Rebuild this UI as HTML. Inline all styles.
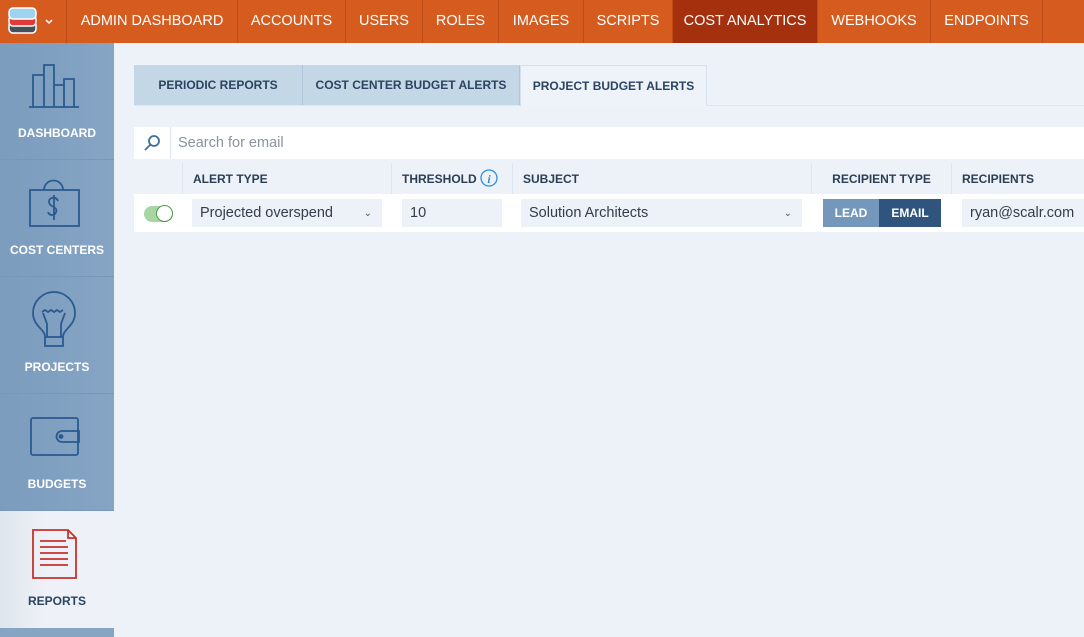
<!DOCTYPE html><html><head><style>
*{box-sizing:border-box;margin:0;padding:0}
body{width:1084px;height:637px;overflow:hidden;background:#edf2f9;font-family:"Liberation Sans",sans-serif;position:relative}
.nav{position:absolute;left:0;top:0;width:1084px;height:43px;background:#d55b1e;display:flex}
.nav div{height:43px;border-right:1px solid #c04c15;color:#fff;font-size:14.5px;line-height:43px;text-align:center}
.nav .act{background:#a5300e}
.side{position:absolute;left:0;top:43px;width:114px;height:594px;background:linear-gradient(90deg,#7c9cbd,#86a5c5)}
.si{position:absolute;left:0;width:114px;height:117px;border-bottom:1px solid #7898ba;color:#fff;font-weight:bold;font-size:12px;text-align:center}
.si span{position:absolute;left:0;right:0;top:83px}
.si svg{position:absolute;left:0;top:0}
.tab{position:absolute;top:65px;height:40px;background:#c4d7e6;color:#2b4461;font-weight:bold;font-size:12px;line-height:40px;text-align:center;border-right:1px solid #b0c6da}
.abs{position:absolute}
.th{position:absolute;top:163px;height:31px;line-height:33px;font-size:12px;font-weight:bold;color:#2b3e55;border-left:1px solid #dde6f0;padding-left:10px}
.in{position:absolute;top:199px;height:28px;background:#edf2f9;font-size:14.5px;color:#333c48;line-height:29px;padding-left:8px}
</style></head><body>
<div class="nav">
<div style="width:67px;position:relative"><svg width="67" height="43" style="position:absolute;left:0;top:0"><rect x="9" y="21" width="27" height="12" rx="4" fill="#44505a" stroke="#fff" stroke-width="1.5"/><rect x="9" y="15" width="27" height="11" rx="4" fill="#e03a3a" stroke="#fff" stroke-width="1.5"/><rect x="9" y="8" width="27" height="11" rx="4" fill="#9fd3ef" stroke="#fff" stroke-width="1.5"/><path d="M46 20l3 3 3-3" stroke="#fff" stroke-width="1.5" fill="none"/></svg></div>
<div style="width:171px">ADMIN DASHBOARD</div><div style="width:108px">ACCOUNTS</div><div style="width:77px">USERS</div><div style="width:76px">ROLES</div><div style="width:85px">IMAGES</div><div style="width:89px">SCRIPTS</div><div class="act" style="width:145px">COST ANALYTICS</div><div style="width:113px">WEBHOOKS</div><div style="width:112px">ENDPOINTS</div>
</div>
<div class="side">
<div class="si" style="top:0"><svg width="114" height="117" fill="none" stroke="#2a5a90" stroke-width="1.8"><path d="M29 64h50M33 64V32h11v32M44 64V22h10v42M54 64V42h10v22M64 64V36h10v28"/></svg><span>DASHBOARD</span></div>
<div class="si" style="top:117px"><svg width="114" height="117" fill="none" stroke="#2a5a90" stroke-width="1.8"><path d="M30 30h49v36H30zM44 30a9.5 9.5 0 0 1 19 0M58 41c-1-3-4-4-6-3-4 1-4 6 0 8s6 4 3 8c-3 2-6 1-7-2M54 35v25"/></svg><span>COST CENTERS</span></div>
<div class="si" style="top:234px"><svg width="114" height="117" fill="none" stroke="#2a5a90" stroke-width="1.8"><path d="M45 60c0-8-12-11-12-24a21 21 0 0 1 42 0c0 13-12 16-12 24zM45 60v9h18v-9M42 35l3-2 3 2 3-2 3 2 3-2 3 2 3-2M43 36l4 11v13M65 36l-4 11v13"/></svg><span>PROJECTS</span></div>
<div class="si" style="top:351px"><svg width="114" height="117" fill="none" stroke="#2a5a90" stroke-width="1.8"><rect x="31" y="24" width="47" height="37" rx="2"/><path d="M62 37h17v11H62a5.5 5.5 0 0 1 0-11z"/><circle cx="61" cy="42.5" r="1.5" fill="#2a5a90"/></svg><span>BUDGETS</span></div>
<div class="si" style="top:468px;background:linear-gradient(90deg,#dfe5ec,#eef2f8 40%);color:#2b4461;border:none"><svg width="114" height="117" fill="none" stroke="#c8322a" stroke-width="1.8"><path d="M33 19h35l8 8v40H33zM68 19v8h8M40 30h26M40 36h28M40 42h28M40 48h28M40 54h28"/></svg><span>REPORTS</span></div>
<div class="abs" style="top:585px;left:0;width:114px;height:9px;background:#86a5c5"></div>
</div>
<div class="abs" style="left:134px;top:105px;width:950px;height:1px;background:#dde6f0"></div>
<div class="tab" style="left:134px;width:169px">PERIODIC REPORTS</div>
<div class="tab" style="left:303px;width:217px">COST CENTER BUDGET ALERTS</div>
<div class="tab" style="left:520px;width:187px;background:#eef2f9;border:1px solid #d6e1ec;border-bottom:none;height:41px">PROJECT BUDGET ALERTS</div>
<div class="abs" style="left:134px;top:127px;width:950px;height:32px;background:#fff"></div>
<div class="abs" style="left:170px;top:127px;width:1px;height:32px;background:#dde6f0"></div>
<svg class="abs" style="left:143px;top:134px" width="18" height="18" fill="none" stroke="#3f6f9f" stroke-width="1.8"><circle cx="11" cy="7" r="5"/><path d="M7.5 10.5L2 16"/></svg>
<div class="abs" style="left:178px;top:135px;font-size:14.5px;color:#8a939d">Search for email</div>
<div class="th" style="left:182px;width:209px">ALERT TYPE</div>
<div class="th" style="left:391px;width:121px">THRESHOLD <svg width="18" height="18" style="vertical-align:-4px"><circle cx="9" cy="9" r="8" fill="none" stroke="#2d8ee0" stroke-width="1.3"/><text x="9" y="14" font-size="12" font-style="italic" fill="#2d8ee0" text-anchor="middle" font-family="Liberation Serif">i</text></svg></div>
<div class="th" style="left:512px;width:299px">SUBJECT</div>
<div class="th" style="left:811px;width:140px;text-align:center;padding:0">RECIPIENT TYPE</div>
<div class="th" style="left:951px;width:133px">RECIPIENTS</div>
<div class="abs" style="left:134px;top:194px;width:950px;height:38px;background:#fff"></div>
<div class="abs" style="left:144px;top:206px;width:29px;height:16px;border-radius:8px;background:#a7d6a3"></div>
<div class="abs" style="left:156px;top:205px;width:17px;height:17px;border-radius:50%;background:#fff;border:1.5px solid #4b9a4a"></div>
<div class="in" style="left:192px;width:190px">Projected overspend<span style="position:absolute;right:10px;top:0;font-size:10px;color:#555">&#8964;</span></div>
<div class="in" style="left:402px;width:100px">10</div>
<div class="in" style="left:521px;width:281px">Solution Architects<span style="position:absolute;right:10px;top:0;font-size:10px;color:#555">&#8964;</span></div>
<div class="abs" style="left:823px;top:199px;width:56px;height:28px;background:#7398bc;color:#fff;font-weight:bold;font-size:12px;line-height:28px;text-align:center">LEAD</div>
<div class="abs" style="left:879px;top:199px;width:62px;height:28px;background:#2f557f;color:#fff;font-weight:bold;font-size:12px;line-height:28px;text-align:center">EMAIL</div>
<div class="in" style="left:962px;width:122px">ryan@scalr.com</div>
</body></html>
